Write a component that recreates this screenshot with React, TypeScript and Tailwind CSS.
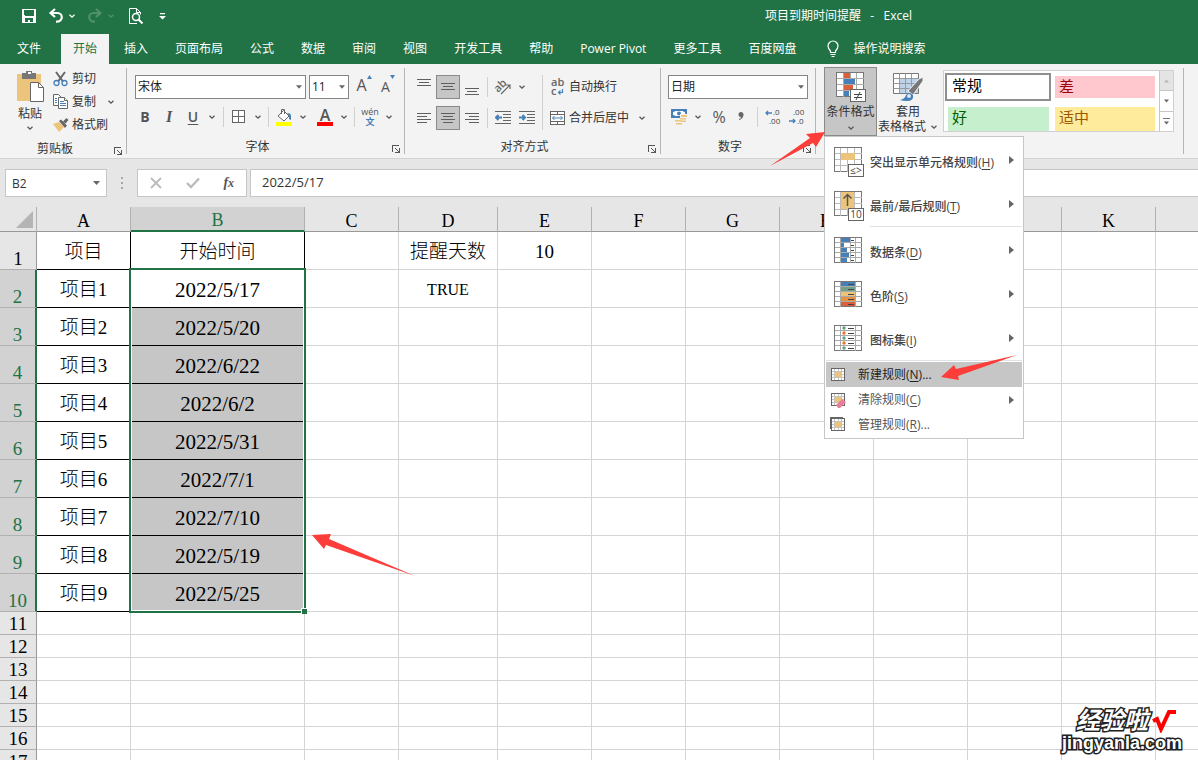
import type { ReactNode } from "react";
import clsx from "clsx";

const ribbonTabs = [
  "插入",
  "页面布局",
  "公式",
  "数据",
  "审阅",
  "视图",
  "开发工具",
  "帮助",
  "Power Pivot",
  "更多工具",
  "百度网盘",
];

const columns = [
  { name: "A", width: "w-[94px]" },
  { name: "B", width: "w-[174px]" },
  { name: "C", width: "w-[94px]" },
  { name: "D", width: "w-[99px]" },
  { name: "E", width: "w-[94px]" },
  { name: "F", width: "w-[94px]" },
  { name: "G", width: "w-[94px]" },
  { name: "H", width: "w-[94px]" },
  { name: "I", width: "w-[94px]" },
  { name: "J", width: "w-[94px]" },
  { name: "K", width: "w-[94px]" },
];

const cells: Record<string, string> = {
  A1: "项目",
  B1: "开始时间",
  D1: "提醒天数",
  E1: "10",
  D2: "TRUE",
};

const startDates = [
  "2022/5/17",
  "2022/5/20",
  "2022/6/22",
  "2022/6/2",
  "2022/5/31",
  "2022/7/1",
  "2022/7/10",
  "2022/5/19",
  "2022/5/25",
];

startDates.forEach((date, i) => {
  cells[`A${i + 2}`] = `项目${i + 1}`;
  cells[`B${i + 2}`] = date;
});

const rows = Array.from({ length: 17 }, (_, i) => i + 1);

/* ---------- small shared pieces ---------- */

function Chevron({ className = "text-[#555]" }: { className?: string }) {
  return (
    <svg className={clsx("h-2 w-2 shrink-0", className)} viewBox="0 0 8 8" fill="none" stroke="currentColor" strokeWidth="1.3">
      <path d="M1.5 2.8 4 5.2 6.5 2.8" />
    </svg>
  );
}

function DropButton({ label }: { label: string }) {
  return (
    <button aria-label={label} className="flex h-6 w-[14px] shrink-0 items-center justify-center">
      <Chevron />
    </button>
  );
}

function Triangle({ className = "w-[7px] text-[#666]" }: { className?: string }) {
  return (
    <svg className={clsx("h-1", className)} viewBox="0 0 7 4" fill="currentColor">
      <path d="M0 0h7L3.5 4z" />
    </svg>
  );
}

function IconButton({ label, pressed, children }: { label: string; pressed?: boolean; children: ReactNode }) {
  return (
    <button
      aria-label={label}
      className={clsx(
        "flex h-6 w-6 shrink-0 items-center justify-center text-[#555]",
        pressed && "border border-[#8a8a8a] bg-[#c6c6c6]"
      )}
    >
      {children}
    </button>
  );
}

function Separator() {
  return <span className="h-5 w-px shrink-0 bg-[#d0d0d0]" />;
}

interface RibbonGroupProps {
  label: string;
  className: string;
  launcher?: boolean;
  children: ReactNode;
}

function RibbonGroup({ label, className, launcher = true, children }: RibbonGroupProps) {
  return (
    <section aria-label={label} className={clsx("my-1 flex shrink-0 flex-col border-r border-[#b5b5b5]", className)}>
      <div className="h-[70px]">{children}</div>
      {launcher && (
        <div className="flex h-[18px] items-center">
          <span className="flex-1 pt-1 pr-1 text-center">{label}</span>
          <button aria-label={`${label}设置`} className="mt-2 mr-1">
            <svg className="h-2 w-2" viewBox="0 0 8 8" fill="none" stroke="#555" shapeRendering="crispEdges">
              <path d="M.5 7V.5H7M7.500 3v4.500H3M3 3l4 4" />
            </svg>
          </button>
        </div>
      )}
    </section>
  );
}

function SelectBox({ label, value, className }: { label: string; value: string; className: string }) {
  return (
    <div className={clsx("relative h-6", className)}>
      <select
        aria-label={label}
        className="h-full w-full appearance-none border border-[#868686] bg-white pl-[2px] text-xs text-[#222]"
      >
        <option>{value}</option>
      </select>
      <Triangle className="pointer-events-none absolute top-[10px] right-1 w-[6px] text-[#666]" />
    </div>
  );
}

/* ---------- ribbon icons ---------- */

function Lines({ rows }: { rows: [number, number, number][] }) {
  return (
    <svg className="h-4 w-4" viewBox="0 0 16 16" fill="#5f5f5f" shapeRendering="crispEdges">
      {rows.map(([x, y, w]) => (
        <rect key={y} x={x} y={y} width={w} height="1" />
      ))}
    </svg>
  );
}

function PasteIcon() {
  return (
    <svg className="h-8 w-[30px]" viewBox="0 0 30 32">
      <path d="M2 4h24v27H2z" fill="#edc47b" />
      <path d="M7 9V3h4V1h6v2h4v6z" fill="#777" />
      <path d="M13 2h3v2h-3z" fill="#fff" />
      <path d="M15.500 12.500h8l5 5v14h-13z" fill="#fff" stroke="#666" />
      <path d="M23.500 12.500v5h5" fill="none" stroke="#666" />
    </svg>
  );
}

function CutIcon() {
  return (
    <svg className="h-4 w-4" viewBox="0 0 16 16" fill="none">
      <path d="m3 1 7 9.500M12 1l-7 9.500" stroke="#666" strokeWidth="2" />
      <circle cx="3.500" cy="12" r="2.500" stroke="#4780b8" strokeWidth="1.300" />
      <circle cx="11.500" cy="12" r="2.500" stroke="#4780b8" strokeWidth="1.300" />
    </svg>
  );
}

function CopyIcon() {
  return (
    <svg className="h-4 w-4" viewBox="0 0 16 16" fill="#fff" stroke="#666">
      <path d="M.5.5h5l3 3v8h-8z" />
      <path d="M5.500 3.500h6l3 3v8h-9z" />
      <path d="M11.500 3.500v3h3" />
      <path d="M2 4.500h2M2 6.500h2M2 8.500h2M7 7.500h4M7 9.500h6M7 11.500h6" stroke="#4780b8" />
    </svg>
  );
}

function BrushIcon() {
  return (
    <svg className="h-4 w-4" viewBox="0 0 16 16">
      <path d="m0 7 6-2 5 5-5 5z" fill="#edc47b" />
      <path d="m6 4 2-1.500 6 6L12 11z" fill="#666" />
      <path d="m10 4.500 3.500-3.500 2 2-3 3.500z" fill="#666" />
    </svg>
  );
}

function GrowIcon({ shrink }: { shrink?: boolean }) {
  return (
    <span className="flex items-start pb-1">
      <span className={shrink ? "pt-1 text-sm leading-4" : "text-base leading-5"}>A</span>
      <svg className="h-[5px] w-[5px]" viewBox="0 0 5 5" fill="#4780b8">
        <path d={shrink ? "M0 0h5L2.500 4z" : "M0 4h5L2.500 0z"} />
      </svg>
    </span>
  );
}

function BordersIcon() {
  return (
    <svg className="h-[14px] w-[14px]" viewBox="0 0 14 14" fill="#fff" stroke="#666" shapeRendering="crispEdges">
      <path d="M.5.5h12v12H.5zM6.500.5v12M.5 6.500h12" />
    </svg>
  );
}

function FillIcon() {
  return (
    <svg className="h-[18px] w-4" viewBox="0 0 16 18">
      <path d="m2 8 5.500-5.500L13 8l-5 5z" fill="#fff" stroke="#666" />
      <path d="M5.500 6V1.500h3V6" fill="none" stroke="#666" />
      <path d="M11 5.500q4-1 4 3V12l-2-1V8z" fill="#4780b8" />
      <path d="M0 14h16v4H0z" fill="#ff0" />
    </svg>
  );
}

function WrapIcon() {
  return (
    <svg className="h-[18px] w-4" viewBox="0 0 16 18" fill="#666" fontSize="11" fontWeight="600">
      <text x="1" y="8">
        ab
      </text>
      <text x="1" y="17">
        c
      </text>
      <path d="M12.500 11v3.500H8.500M10.500 12.500l-2 2 2 2" fill="none" stroke="#4780b8" strokeWidth="1.200" />
    </svg>
  );
}

function MergeIcon() {
  return (
    <svg className="h-4 w-4" viewBox="0 0 16 16" fill="#fff" stroke="#666">
      <path d="M.5 1.500h14v13H.5zM.5 4.500h14M.5 11.500h14M7.500 1.500v3M7.500 11.500v3" shapeRendering="crispEdges" />
      <path d="M2.500 8h10M4.500 6l-2 2 2 2M10.500 6l2 2-2 2" fill="none" stroke="#4780b8" />
    </svg>
  );
}

function IndentIcon({ increase }: { increase?: boolean }) {
  return (
    <svg className="h-4 w-4" viewBox="0 0 16 16" fill="none" stroke="#666">
      <path d="M0 1.500h16M8 4.500h8M8 7.500h8M8 10.500h8M0 13.500h16" shapeRendering="crispEdges" />
      <path d={increase ? "M0 7.500h6M3.500 5l2.500 2.500L3.500 10" : "M7 7.500H1M3.500 5 1 7.500 3.500 10"} stroke="#4780b8" strokeWidth="2" />
    </svg>
  );
}

function OrientationIcon() {
  return (
    <svg className="h-4 w-4 overflow-visible" viewBox="0 0 16 16">
      <text x="0" y="11" fontSize="11" fontWeight="600" fill="#666" transform="rotate(-45 5 9)">
        ab
      </text>
      <path d="M6 15 15 6M11 6h4v4" fill="none" stroke="#666" strokeWidth="1.200" />
    </svg>
  );
}

function CurrencyIcon() {
  return (
    <svg className="h-4 w-4" viewBox="0 0 16 16">
      <path d="M0 0h16v9H0z" fill="#4780b8" />
      <path d="M2 3q2 0 2-1h8q0 1 2 1v3q-2 0-2 1H4q0-1-2-1z" fill="#fff" />
      <circle cx="8" cy="4.500" r="2" fill="#4780b8" />
      <path d="M9 5h7v8h-3v3H4v-6h5z" fill="#f3f3f3" />
      <path d="M10 6h6v2h-6zM9 9h6v1.500H9zM10 11.500h5V13h-5zM4 11h6v1.500H4zM5 14h6v1.500H5z" fill="#edc47b" />
    </svg>
  );
}

function DecimalIcon({ decrease }: { decrease?: boolean }) {
  return (
    <svg className="h-4 w-4 overflow-visible" viewBox="0 0 16 16" fill="#444" fontSize="8">
      <text x={decrease ? 4 : 8} y="6">
        {decrease ? ".00" : ".0"}
      </text>
      <text x={decrease ? 8 : 4} y="15">
        {decrease ? ".0" : ".00"}
      </text>
      <path
        d={decrease ? "M0 12h6M4 10l2 2-2 2" : "M7 4H1M3 2 1 4l2 2"}
        fill="none"
        stroke="#4780b8"
        strokeWidth="1.300"
      />
    </svg>
  );
}

function PinyinIcon() {
  return (
    <svg className="h-[18px] w-[18px] overflow-visible" viewBox="0 0 18 18" textAnchor="middle">
      <text x="9" y="7" fontSize="9" fill="#555">
        wén
      </text>
      <text x="9" y="17" fontSize="9" fontWeight="700" fill="#4780b8">
        文
      </text>
    </svg>
  );
}

function ConditionalIcon() {
  return (
    <svg className="h-[30px] w-[30px]" viewBox="0 0 30 30" shapeRendering="crispEdges">
      <path d="M.5.5h27v24H.5z" fill="#fff" stroke="#777" />
      <path d="M.5 6.500h27M.5 12.500h27M.5 18.500h27M7.500.5v24M14.500.5v24M20.500.5v24" stroke="#aaa" />
      <path d="M8 1h6v5H8zM8 13h9v5H8z" fill="#d9603b" />
      <path d="M8 7h11v5H8zM8 19h5v5H8z" fill="#4780b8" />
      <path d="M14.500 17.500h15v12h-15z" fill="#fff" stroke="#666" />
      <path d="M18 22.500h8M18 25.500h8M24 20l-4 8" stroke="#444" shapeRendering="auto" />
    </svg>
  );
}

function TableStyleIcon() {
  return (
    <svg className="h-[30px] w-[30px]" viewBox="0 0 30 30">
      <path d="M.5 1.500h25v20H.5z" fill="#fff" stroke="#777" />
      <path d="M7 7h18v14H7z" fill="#bcd3ea" />
      <path d="M.5 6.500h25M.5 11.500h25M.5 16.500h25M6.500 1.500v20M12.500 1.500v20M18.500 1.500v20" fill="none" stroke="#999" />
      <path d="m15 19 11-12 4-2v4L20 23z" fill="#777" stroke="#f3f3f3" />
      <path d="M7 28q5-1 6-5 3-4 7 0 1 6-6 6-4 0-7-1z" fill="#4780b8" />
      <circle cx="16" cy="24" r="2" fill="#dce8f4" />
    </svg>
  );
}

/* ---------- conditional formatting menu ---------- */

function MenuGrid({ badge, kind }: { badge?: string; kind: "cell" | "top" | "bars" | "scale" | "icons" }) {
  const scale = ["#4780b8", "#6fa287", "#edc47b", "#e8913f", "#d9603b"];
  const dots = ["#5f9f83", "#e8762c", "#5f9f83", "#e8762c", "#5f9f83"];
  const bars = [9, 3, 6, 8, 6];
  return (
    <svg className="h-[30px] w-[30px] shrink-0" viewBox="0 0 30 30" shapeRendering="crispEdges">
      {kind === "cell" || kind === "top" ? (
        <>
          <path d="M.5.5h27v24H.5z" fill="#fff" stroke="#777" />
          <path d="M.5 6.500h27M.5 12.500h27M.5 18.500h27M6.500.5v24M13.500.5v24M20.500.5v24" stroke="#bbb" />
          <path d={kind === "cell" ? "M7 6h14v7H7z" : "M7 1h13v17H7z"} fill="#edc47b" />
          {kind === "top" && <path d="M13.500 15V3M9.500 7.500l4-4 4 4" fill="none" stroke="#555" strokeWidth="1.500" shapeRendering="auto" />}
        </>
      ) : (
        <>
          <path d="M.5.5h27v25H.5z" fill="#fff" stroke="#777" />
          <path d="M.5 5.500h27M.5 10.500h27M.5 15.500h27M.5 20.500h27M6.500.5v25M21.500.5v25" stroke="#aaa" />
          {kind === "bars" && <path d="M16.500.5v25" stroke="#aaa" />}
          {scale.map((color, i) => (
            <g key={color}>
              {kind === "scale" && <rect x="7" y={i * 5 + 1} width="14" height="4" fill={color} />}
              {kind === "bars" && <rect x="7" y={i * 5 + 1} width={bars[i]} height="4" fill="#4780b8" />}
              {kind === "icons" && <circle cx="10" cy={i * 5 + 3} r="1.700" fill={dots[i]} shapeRendering="auto" />}
              <rect x={kind === "bars" ? 17 : 14} y={i * 5 + 3} width={kind === "bars" ? 3 : 6} height="1" fill="#444" />
            </g>
          ))}
        </>
      )}
      {badge && (
        <>
          <path d="M14.500 17.500h15v12h-15z" fill="#fff" stroke="#666" />
          <text x="22" y="27" fontSize="10" textAnchor="middle" fill="#444">
            {badge}
          </text>
        </>
      )}
    </svg>
  );
}

function RuleIcon({ kind }: { kind: "new" | "clear" | "manage" }) {
  return (
    <svg className="h-4 w-4 shrink-0" viewBox="0 0 16 16" shapeRendering="crispEdges">
      {kind === "manage" && <path d="M.5 12V.5H13" fill="none" stroke="#666" />}
      <path d="M1.500 1.500h13v12h-13z" fill="#fff" stroke="#666" />
      <path d="M2 4.500h12M2 7.500h12M2 10.500h12M4.500 2v11M8.500 2v11M11.500 2v11" stroke="#c4c4c4" />
      <path d="M5 5h6v5H5z" fill="#edc47b" />
      {kind === "clear" && <path d="m6 13 6-6 4 3-6 6H8z" fill="#e77f97" shapeRendering="auto" />}
    </svg>
  );
}

interface MenuItemProps {
  icon: ReactNode;
  text: string;
  accel: string;
  submenu?: boolean;
  dots?: boolean;
  size: "large" | "small";
  active?: boolean;
}

function MenuItem({ icon, text, accel, submenu, dots, size, active }: MenuItemProps) {
  return (
    <button
      role="menuitem"
      className={clsx(
        "flex w-full items-center text-left whitespace-nowrap",
        size === "large" ? "h-10 gap-[6px] pl-2 font-medium" : "h-[25px] gap-3 pl-1",
        active ? "bg-[#c6c6c6] text-[#222]" : size === "large" ? "text-[#444]" : "text-[#555]"
      )}
    >
      {icon}
      <span className={size === "large" ? "pt-[2px]" : undefined}>
        {text}(<u className="underline-offset-2">{accel}</u>){dots && "..."}
      </span>
      {submenu && (
        <svg className={clsx("mr-2 ml-auto w-[5px]", size === "large" ? "h-3 pb-1" : "h-2")} viewBox="0 0 5 8" fill="#666">
          <path d="M0 0v8l5-4z" />
        </svg>
      )}
    </button>
  );
}

function FormattingMenu() {
  return (
    <div role="menu" className="absolute top-full left-0 z-20 w-[200px] border border-[#c6c6c6] bg-white px-px pb-px">
      <div className="flex flex-col gap-1 pt-[5px]">
        <MenuItem size="large" icon={<MenuGrid kind="cell" badge="≤>" />} text="突出显示单元格规则" accel="H" submenu />
        <MenuItem size="large" icon={<MenuGrid kind="top" badge="10" />} text="最前/最后规则" accel="T" submenu />
      </div>
      <hr className="ml-11 border-[#dfe2e6]" />
      <div className="flex flex-col gap-1 pt-[5px]">
        <MenuItem size="large" icon={<MenuGrid kind="bars" />} text="数据条" accel="D" submenu />
        <MenuItem size="large" icon={<MenuGrid kind="scale" />} text="色阶" accel="S" submenu />
        <MenuItem size="large" icon={<MenuGrid kind="icons" />} text="图标集" accel="I" submenu />
      </div>
      <hr className="mb-px border-[#dfe2e6]" />
      <MenuItem size="small" icon={<RuleIcon kind="new" />} text="新建规则" accel="N" dots active />
      <MenuItem size="small" icon={<RuleIcon kind="clear" />} text="清除规则" accel="C" submenu />
      <MenuItem size="small" icon={<RuleIcon kind="manage" />} text="管理规则" accel="R" dots />
    </div>
  );
}

/* ---------- window sections ---------- */

function TitleBar() {
  return (
    <header className="flex h-[34px] items-center bg-[#217346] pb-[2px] pl-[21px] text-white">
      <div className="flex items-center gap-[11px]">
        <button aria-label="保存">
          <svg className="h-4 w-4" viewBox="0 0 16 16" fill="none" stroke="currentColor" shapeRendering="crispEdges">
            <path d="M1 1h14v14H1z" fill="currentColor" stroke="none" />
            <path d="M3 2h10v5l-1 1H4L3 7zM4 10h8v4H9v-2H7v2H4z" fill="#217346" stroke="none" />
          </svg>
        </button>
        <button aria-label="撤消" className="flex items-center gap-1">
          <svg className="h-4 w-4" viewBox="0 0 16 16" fill="none" stroke="currentColor" strokeWidth="2.200">
            <path d="M7 1 2.500 5 7 9M3 5h6.500a4.300 4.300 0 0 1 0 8.600H8" />
          </svg>
          <Chevron className="text-white" />
        </button>
        <button aria-label="恢复" className="flex items-center gap-1 text-[#4f9169]">
          <svg className="h-4 w-4" viewBox="0 0 16 16" fill="none" stroke="currentColor" strokeWidth="2.200">
            <path d="M9 1l4.500 4L9 9M13 5H6.500a4.300 4.300 0 0 0 0 8.600H8" />
          </svg>
          <Chevron className="text-[#4f9169]" />
        </button>
        <button aria-label="打印预览" className="ml-[2px]">
          <svg className="h-4 w-4" viewBox="0 0 16 16" fill="none" stroke="currentColor">
            <path d="M9 15.500H1.500V.5h7l4 4v2M8.500.5v4h4" />
            <circle cx="8" cy="9" r="3.500" strokeWidth="1.500" />
            <path d="m10.500 11.500 4 4" strokeWidth="2" />
          </svg>
        </button>
        <button aria-label="自定义快速访问工具栏" className="ml-1">
          <svg className="h-[7px] w-[7px]" viewBox="0 0 7 7" fill="currentColor">
            <path d="M1 0h5v1.200H1zM0 3h7L3.500 6.500z" />
          </svg>
        </button>
      </div>
      <h1 className="ml-auto pr-[286px] whitespace-pre">项目到期时间提醒{"   -   "}Excel</h1>
    </header>
  );
}

function TabBar() {
  return (
    <nav className="flex h-[30px] gap-[3px] bg-[#217346] pl-[5px] whitespace-nowrap text-white">
      <button className="mr-[5px] px-3 pb-px">文件</button>
      <button className="bg-[#f3f3f3] px-3 pb-px text-[#217346]">开始</button>
      {ribbonTabs.map((tab) => (
        <button key={tab} className="px-3 pb-px">
          {tab}
        </button>
      ))}
      <button className="ml-1 flex items-center gap-[14px] px-3 pb-px">
        <svg className="h-[18px] w-3" viewBox="0 0 12 18" fill="none" stroke="currentColor" strokeWidth="1.200">
          <path d="M3.500 12.500V11Q1 8.500 1 6a5 5 0 0 1 10 0q0 2.500-2.500 5v1.500zM3.500 14.500h5M4.500 16.500h3" />
        </svg>
        操作说明搜索
      </button>
    </nav>
  );
}

function ClipboardGroup() {
  return (
    <RibbonGroup label="剪贴板" className="w-[127px]">
      <div className="flex gap-2 pt-[2px] pl-[15px]">
        <button className="flex w-[30px] flex-col items-center">
          <PasteIcon />
          <span className="pt-1 leading-4 whitespace-nowrap">粘贴</span>
          <Chevron className="mt-[2px] text-[#555]" />
        </button>
        <div className="flex flex-col whitespace-nowrap">
          <button className="flex h-[23px] items-center gap-[3px] pb-[6px]">
            <CutIcon />
            剪切
          </button>
          <button className="flex h-[23px] items-center gap-[3px] pb-[6px]">
            <CopyIcon />
            复制
            <Chevron className="ml-2 text-[#555]" />
          </button>
          <button className="flex h-[23px] items-center gap-[3px] pb-[6px]">
            <BrushIcon />
            格式刷
          </button>
        </div>
      </div>
    </RibbonGroup>
  );
}

function FontGroup() {
  return (
    <RibbonGroup label="字体" className="w-[278px]">
      <div className="flex items-center pt-[7px] pl-2">
        <SelectBox label="字体名称" value="宋体" className="mr-[3px] w-[171px]" />
        <SelectBox label="字号" value="11" className="mr-[3px] w-10" />
        <IconButton label="增大字号">
          <GrowIcon />
        </IconButton>
        <IconButton label="减小字号">
          <GrowIcon shrink />
        </IconButton>
      </div>
      <div className="flex items-center pt-[6px] pl-[6px]">
        <IconButton label="加粗">
          <b className="text-sm">B</b>
        </IconButton>
        <IconButton label="倾斜">
          <i className="font-['Liberation_Serif',serif] text-base font-bold">I</i>
        </IconButton>
        <IconButton label="下划线">
          <span className="text-sm font-semibold underline underline-offset-2">U</span>
        </IconButton>
        <DropButton label="下划线选项" />
        <div className="flex items-center gap-[3px] pl-1">
          <Separator />
          <div className="flex">
            <IconButton label="边框">
              <BordersIcon />
            </IconButton>
            <DropButton label="边框选项" />
          </div>
          <Separator />
          <div className="flex">
            <IconButton label="填充颜色">
              <FillIcon />
            </IconButton>
            <DropButton label="填充颜色选项" />
          </div>
          <div className="flex">
            <IconButton label="字体颜色">
              <span className="h-[18px] w-4 border-b-4 border-[#f00] text-base leading-[14px] font-semibold">A</span>
            </IconButton>
            <DropButton label="字体颜色选项" />
          </div>
          <Separator />
          <div className="flex">
            <IconButton label="拼音指南">
              <PinyinIcon />
            </IconButton>
            <DropButton label="拼音选项" />
          </div>
        </div>
      </div>
    </RibbonGroup>
  );
}

function AlignmentGroup() {
  return (
    <RibbonGroup label="对齐方式" className="w-[256px]">
      <div className="flex gap-[3px] pt-[7px] pl-[7px]">
        <div className="flex flex-col gap-[7px]">
          <div className="flex items-center">
            <IconButton label="顶端对齐">
              <Lines rows={[[1, 0, 14], [3, 3, 10], [1, 6, 14]]} />
            </IconButton>
            <IconButton label="垂直居中" pressed>
              <Lines rows={[[1, 4, 14], [3, 7, 10], [1, 10, 14]]} />
            </IconButton>
            <IconButton label="底端对齐">
              <Lines rows={[[1, 9, 14], [3, 12, 10], [1, 15, 14]]} />
            </IconButton>
            <span className="w-[3px]" />
            <Separator />
            <span className="w-[3px]" />
            <IconButton label="方向">
              <OrientationIcon />
            </IconButton>
            <DropButton label="方向选项" />
          </div>
          <div className="flex items-center">
            <IconButton label="左对齐">
              <Lines rows={[[1, 3, 14], [1, 6, 10], [1, 9, 14], [1, 12, 10]]} />
            </IconButton>
            <IconButton label="居中" pressed>
              <Lines rows={[[1, 3, 14], [3, 6, 10], [1, 9, 14], [3, 12, 10]]} />
            </IconButton>
            <IconButton label="右对齐">
              <Lines rows={[[1, 3, 14], [5, 6, 10], [1, 9, 14], [5, 12, 10]]} />
            </IconButton>
            <span className="w-[3px]" />
            <Separator />
            <span className="w-[3px]" />
            <IconButton label="减少缩进量">
              <IndentIcon />
            </IconButton>
            <IconButton label="增加缩进量">
              <IndentIcon increase />
            </IconButton>
          </div>
        </div>
        <span className="h-[55px] w-px bg-[#d0d0d0]" />
        <div className="flex flex-col gap-[7px] pl-1 whitespace-nowrap">
          <button className="flex h-6 items-center gap-[3px]">
            <WrapIcon />
            自动换行
          </button>
          <div className="flex">
            <button className="flex h-6 items-center gap-[3px]">
              <MergeIcon />
              合并后居中
            </button>
            <span className="w-[6px]" />
            <DropButton label="合并选项" />
          </div>
        </div>
      </div>
    </RibbonGroup>
  );
}

function NumberGroup() {
  return (
    <RibbonGroup label="数字" className="w-[155px]">
      <div className="pt-[7px] pr-[7px] pl-[7px]">
        <SelectBox label="数字格式" value="日期" className="w-full" />
      </div>
      <div className="flex items-center pt-[6px] pl-[6px]">
        <IconButton label="会计数字格式">
          <CurrencyIcon />
        </IconButton>
        <DropButton label="会计选项" />
        <IconButton label="百分比样式">
          <span className="pl-1 text-base">%</span>
        </IconButton>
        <IconButton label="千位分隔样式">
          <svg className="h-3 w-[6px]" viewBox="0 0 6 12" fill="#666">
            <path d="M3 1a2.500 2.500 0 0 1 2.500 3Q5 8 1 9V8q2-.5 2-2A2.500 2.500 0 0 1 3 1z" />
          </svg>
        </IconButton>
        <span className="w-1" />
        <Separator />
        <span className="w-[3px]" />
        <IconButton label="增加小数位数">
          <DecimalIcon />
        </IconButton>
        <IconButton label="减少小数位数">
          <DecimalIcon decrease />
        </IconButton>
      </div>
    </RibbonGroup>
  );
}

function StylesGroup() {
  return (
    <RibbonGroup label="样式" className="w-[368px]" launcher={false}>
      <div className="flex items-start pl-2">
        <div className="relative -mt-px">
          <button
            aria-expanded="true"
            className="flex h-[69px] w-[53px] flex-col items-center border border-[#8a8a8a] bg-[#c6c6c6] pt-1 whitespace-nowrap"
          >
            <ConditionalIcon />
            <span className="pt-[2px]">条件格式</span>
            <Chevron className="mt-1 text-[#555]" />
          </button>
          <FormattingMenu />
        </div>
        <button className="flex w-[66px] flex-col items-center pt-1 pr-1 leading-[15px] whitespace-nowrap">
          <TableStyleIcon />
          <span className="pt-[2px]">套用</span>
          <span className="flex items-center gap-1">
            表格格式
            <Chevron />
          </span>
        </button>
        <div className="mt-[2px] flex h-[62px] w-[231px] border border-[#d0d0d0] bg-white font-['Noto_Sans_CJK_SC',sans-serif] text-[15px] leading-5">
          <div className="grid flex-1 grid-cols-[106px_1fr] gap-1 py-[2px] pr-1 pl-px">
            <button className="border-2 border-[#8f8f8f] pb-1 pl-[5px] text-left text-black">常规</button>
            <button className="my-[3px] bg-[#ffc7ce] pb-[2px] pl-1 text-left text-[#9c0006]">差</button>
            <button className="my-[2px] mr-[2px] ml-[3px] bg-[#c6efce] pb-1 pl-1 text-left text-[#006100]">好</button>
            <button className="my-[2px] bg-[#ffeb9c] pb-1 pl-1 text-left text-[#9c5700]">适中</button>
          </div>
          <div className="flex w-[14px] flex-col border-l border-[#c6c6c6]">
            <button aria-label="上一行" className="flex flex-1 items-center justify-center bg-[#e4e4e4]">
              <Triangle className="w-[5px] rotate-180 text-[#b5b5b5]" />
            </button>
            <button aria-label="下一行" className="flex flex-1 items-center justify-center border-y border-[#c6c6c6]">
              <Triangle className="w-[5px] text-[#666]" />
            </button>
            <button aria-label="其他" className="flex flex-1 flex-col items-center justify-center gap-[2px]">
              <span className="h-px w-[7px] bg-[#777]" />
              <Triangle className="w-[5px] text-[#666]" />
            </button>
          </div>
        </div>
      </div>
    </RibbonGroup>
  );
}

function FormulaBar() {
  return (
    <div className="flex h-12 shrink-0 items-center bg-[#e6e6e6] pl-[5px] text-[#333]">
      <div className="relative h-7 w-[102px]">
        <input
          aria-label="名称框"
          defaultValue="B2"
          className="h-full w-full border border-[#c6c6c6] bg-white pl-[6px] text-xs"
        />
        <Triangle className="pointer-events-none absolute top-3 right-[7px] w-[7px] text-[#666]" />
      </div>
      <span className="mx-[14px] flex w-[2px] flex-col gap-[3px]">
        <span className="h-[2px] bg-[#a8a8a8]" />
        <span className="h-[2px] bg-[#a8a8a8]" />
        <span className="h-[2px] bg-[#a8a8a8]" />
      </span>
      <div className="mr-[3px] flex h-7 w-[110px] shrink-0 items-center justify-around border border-[#c6c6c6] bg-white">
        <button aria-label="取消">
          <svg className="h-3 w-3" viewBox="0 0 12 12" fill="none" stroke="#bcbcbc" strokeWidth="1.800">
            <path d="m1 1 10 10M11 1 1 11" />
          </svg>
        </button>
        <button aria-label="输入">
          <svg className="h-3 w-[14px]" viewBox="0 0 14 12" fill="none" stroke="#bcbcbc" strokeWidth="2.400">
            <path d="m1 6 4 4 8-8.500" />
          </svg>
        </button>
        <button aria-label="插入函数" className="font-['Liberation_Serif',serif] text-sm leading-4 font-bold text-[#555] italic">
          f<span className="text-xs">x</span>
        </button>
      </div>
      <input
        aria-label="编辑栏"
        defaultValue="2022/5/17"
        className="h-7 min-w-0 flex-1 border border-r-0 border-[#c6c6c6] bg-white pb-[2px] pl-[11px] text-[13px]"
      />
    </div>
  );
}

function Cell({ col, row }: { col: string; row: number }) {
  const inTable = (col === "A" || col === "B") && row <= 10;
  const value = cells[`${col}${row}`];
  return (
    <td
      className={clsx(
        "relative border-r border-b p-0 text-center",
        inTable ? "border-black" : "border-[#d4d4d4]",
        row <= 10 ? "pt-[2px] leading-6" : "leading-5",
        col === "B" && row > 2 && row <= 10 && "bg-[#c6c6c6]",
        value === "TRUE" && "text-base",
        col === "B" && row > 1 && "text-[21px]"
      )}
    >
      {value}
      {col === "B" && row === 2 && (
        <div className="pointer-events-none absolute -top-[2px] -left-[2px] z-10 h-[345px] w-[177px] border-2 border-[#217346]">
          <div className="h-full w-full border border-white" />
          <span className="absolute -right-[3px] -bottom-[3px] h-[6px] w-[6px] border-t border-l border-white bg-[#217346]" />
        </div>
      )}
    </td>
  );
}

function Sheet() {
  return (
    <div className="min-h-0 flex-1 overflow-hidden bg-white">
      <table className="w-full table-fixed border-separate border-spacing-0 font-['Liberation_Serif','Noto_Sans_CJK_SC',serif] text-[19px] font-light text-black">
        <colgroup>
          <col className="w-[37px]" />
          {columns.map((c) => (
            <col key={c.name} className={c.width} />
          ))}
          <col />
        </colgroup>
        <thead>
          <tr className="h-[25px] bg-[#e6e6e6] text-[18px] leading-5">
            <td className="border-r border-b border-r-[#b1b1b1] border-b-[#999] p-0">
              <svg className="ml-4 h-[17px] w-[17px]" viewBox="0 0 17 17" fill="#b4b4b4">
                <path d="M17 0v17H0z" />
              </svg>
            </td>
            {columns.map((c) => (
              <th
                key={c.name}
                scope="col"
                className={clsx(
                  "border-r border-r-[#b1b1b1] p-0 pt-[3px] font-normal",
                  c.name === "B" ? "border-b-2 border-b-[#217346] bg-[#d2d2d2] text-[#217346]" : "border-b border-b-[#999]"
                )}
              >
                {c.name}
              </th>
            ))}
            <td className="border-b border-[#999] p-0" />
          </tr>
        </thead>
        <tbody>
          {rows.map((row) => {
            const selected = row > 1 && row <= 10;
            return (
              <tr key={row} className={row <= 10 ? "h-[38px]" : "h-[23px]"}>
                <th
                  scope="row"
                  className={clsx(
                    "border-b border-b-[#b1b1b1] p-0 text-center align-bottom leading-5 font-normal",
                    selected ? "border-r-2 border-r-[#217346] bg-[#d2d2d2] text-[#217346]" : "border-r border-r-[#999] bg-[#e6e6e6]"
                  )}
                >
                  {row}
                </th>
                {columns.map((c) => (
                  <Cell key={c.name} col={c.name} row={row} />
                ))}
                <td className="border-b border-[#d4d4d4] p-0" />
              </tr>
            );
          })}
        </tbody>
      </table>
    </div>
  );
}

function Watermark() {
  return (
    <div className="absolute right-4 bottom-[7px] z-20 font-['Liberation_Sans','Noto_Sans_CJK_SC',sans-serif] font-bold text-white [-webkit-text-stroke:3px_#222] [paint-order:stroke_fill]">
      <div className="flex h-6 items-center justify-end gap-1 pr-[6px] text-2xl leading-6 italic">
        经验啦
        <svg className="h-6 w-6" viewBox="0 0 24 24" fill="none" stroke="#f00" strokeWidth="4">
          <path d="m1 12 4-2 4 10L17 3h7" />
        </svg>
      </div>
      <div className="text-lg leading-5">jingyanla.com</div>
    </div>
  );
}

function Arrows() {
  return (
    <>
      <svg className="pointer-events-none absolute top-[131px] left-[769px] z-30 h-[36px] w-[56px]" viewBox="0 0 56 36" fill="#fc3d39">
        <path d="M56 1 47 16l-3-4L1 35l40-28-4-4z" />
      </svg>
      <svg className="pointer-events-none absolute top-[355px] left-[941px] z-30 h-[26px] w-[77px]" viewBox="0 0 77 26" fill="#fc3d39">
        <path d="m0 22 13-12 2 4L76 0 17 21l1 4z" />
      </svg>
      <svg className="pointer-events-none absolute top-[533px] left-[312px] z-30 h-[44px] w-[104px]" viewBox="0 0 104 44" fill="#fc3d39">
        <path d="m0 2 19-1-2 5 86 37L14 12l-2 4z" />
      </svg>
    </>
  );
}

export default function App() {
  return (
    <div className="relative flex h-screen flex-col overflow-hidden bg-white font-['Open_Sans','Noto_Sans_CJK_SC',sans-serif] text-xs text-[#333]">
      <TitleBar />
      <TabBar />
      <div className="flex h-[95px] shrink-0 border-b border-[#d2d2d2] bg-[#f3f3f3]">
        <ClipboardGroup />
        <FontGroup />
        <AlignmentGroup />
        <NumberGroup />
        <StylesGroup />
      </div>
      <FormulaBar />
      <Sheet />
      <Watermark />
      <Arrows />
    </div>
  );
}
